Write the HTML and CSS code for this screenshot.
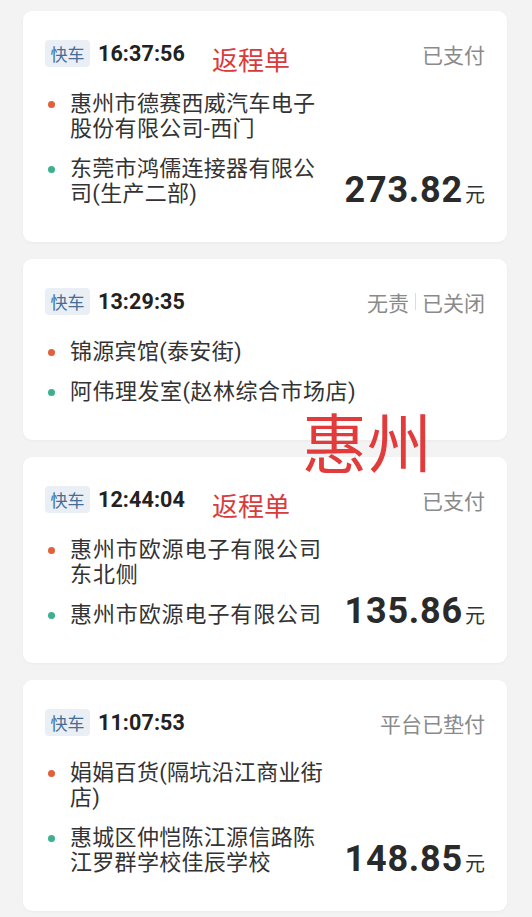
FILE: index.html
```html
<!DOCTYPE html>
<html lang="zh-CN">
<head>
<meta charset="utf-8">
<title>行程列表</title>
<link rel="stylesheet" href="styles.css">
</head>
<body>
<div class="page">
  <div class="list">
    <div class="card">
      <div class="head">
        <span class="badge">快车</span>
        <span class="time">16:37:56</span>
        <span class="mark">返程单</span>
        <span class="status">已支付</span>
      </div>
      <div class="body">
        <div class="addrs">
          <div class="addr"><i class="dot dot-start"></i><span class="txt">惠州市德赛西威汽车电子股份有限公司-西门</span></div>
          <div class="addr"><i class="dot dot-end"></i><span class="txt">东莞市鸿儒连接器有限公司(生产二部)</span></div>
        </div>
        <div class="amount"><span class="num">273.82</span><span class="unit">元</span></div>
      </div>
    </div>

    <div class="card">
      <div class="head">
        <span class="badge">快车</span>
        <span class="time">13:29:35</span>
        <span class="status">无责<span class="sep"></span>已关闭</span>
      </div>
      <div class="body">
        <div class="addrs addrs-full">
          <div class="addr"><i class="dot dot-start"></i><span class="txt">锦源宾馆(泰安街)</span></div>
          <div class="addr"><i class="dot dot-end"></i><span class="txt txt-mid">阿伟理发室(赵林综合市场店)</span></div>
        </div>
      </div>
    </div>

    <div class="card">
      <div class="head">
        <span class="badge">快车</span>
        <span class="time">12:44:04</span>
        <span class="mark">返程单</span>
        <span class="status">已支付</span>
      </div>
      <div class="body">
        <div class="addrs">
          <div class="addr"><i class="dot dot-start"></i><span class="txt txt-wide">惠州市欧源电子有限公司<br>东北侧</span></div>
          <div class="addr"><i class="dot dot-end"></i><span class="txt txt-wide">惠州市欧源电子有限公司</span></div>
        </div>
        <div class="amount"><span class="num">135.86</span><span class="unit">元</span></div>
      </div>
    </div>

    <div class="card">
      <div class="head">
        <span class="badge">快车</span>
        <span class="time">11:07:53</span>
        <span class="status">平台已垫付</span>
      </div>
      <div class="body">
        <div class="addrs">
          <div class="addr"><i class="dot dot-start"></i><span class="txt">娟娟百货(隔坑沿江商业街店)</span></div>
          <div class="addr"><i class="dot dot-end"></i><span class="txt">惠城区仲恺陈江源信路陈江罗群学校佳辰学校</span></div>
        </div>
        <div class="amount"><span class="num">148.85</span><span class="unit">元</span></div>
      </div>
    </div>
  </div>
  <div class="city">惠州</div>
</div>
</body>
</html>
```
FILE: styles.css
```css
* { box-sizing: border-box; }
html, body {
  margin: 0;
  padding: 0;
  background: #f3f3f3;
}
body {
  font-family: Roboto, "Noto Sans CJK SC", sans-serif;
  color: #333;
}
.page {
  position: relative;
  width: 532px;
  min-height: 917px;
  overflow: hidden;
}
.list {
  display: flex;
  flex-direction: column;
  gap: 17px;
  padding: 11px 25px 0 23px;
}
.card {
  background: #fff;
  border-radius: 9px;
  box-shadow: 0 1px 3px rgba(0,0,0,0.04);
  padding: 29px 22px 36px 22px;
}
.head {
  display: flex;
  align-items: center;
  height: 27px;
}
.badge {
  display: inline-flex;
  align-items: center;
  justify-content: center;
  height: 27px;
  width: 45px;
  border-radius: 4px;
  background: #e9eff4;
  color: #456d96;
  font-family: "Noto Sans CJK SC", sans-serif;
  font-size: 17px;
}
.time {
  margin-left: 8px;
  font-family: Roboto, sans-serif;
  font-weight: 700;
  font-size: 21.5px;
  color: #222;
  letter-spacing: 0.1px;
}
.mark {
  margin-left: 27px;
  margin-top: 11px;
  font-family: "Noto Sans CJK SC", sans-serif;
  font-size: 26px;
  color: #d93a3c;
  line-height: 1;
}
.status {
  margin-left: auto;
  display: flex;
  align-items: center;
  font-family: "Noto Sans CJK SC", sans-serif;
  font-size: 21px;
  color: #8a8a8a;
}
.sep {
  display: inline-block;
  width: 1px;
  height: 17px;
  background: #dcdcdc;
  margin: 0 6px;
}
.body {
  display: flex;
  align-items: flex-end;
  margin-top: 24px;
}
.addrs {
  display: flex;
  flex-direction: column;
  gap: 15px;
  width: 283px;
  flex: none;
}
.addrs-full {
  flex: 1;
  width: auto;
}
.addr {
  display: flex;
  align-items: flex-start;
}
.dot {
  flex: none;
  width: 7px;
  height: 7px;
  border-radius: 50%;
  margin: 10px 15px 0 3px;
}
.dot-start { background: #e2603c; }
.dot-end { background: #3cb08f; }
.txt {
  flex: 1;
  font-size: 22px;
  line-height: 25px;
  letter-spacing: 0.3px;
  color: #333;
  word-break: break-all;
}
.txt-wide {
  letter-spacing: 0.9px;
  white-space: nowrap;
}
.txt-mid { letter-spacing: 0.5px; }
.amount {
  margin-left: auto;
  display: flex;
  align-items: baseline;
  line-height: 25px;
}
.num {
  font-family: Roboto, sans-serif;
  font-weight: 700;
  font-size: 36px;
  letter-spacing: 0.8px;
  color: #2a2a2a;
}
.unit {
  margin-left: 2px;
  font-family: "Noto Sans CJK SC", sans-serif;
  font-size: 20px;
  color: #333;
}
.city {
  position: absolute;
  left: 302px;
  top: 408px;
  font-family: "Noto Sans CJK SC", sans-serif;
  font-size: 65px;
  line-height: 1;
  color: #e23b3b;
}
```
